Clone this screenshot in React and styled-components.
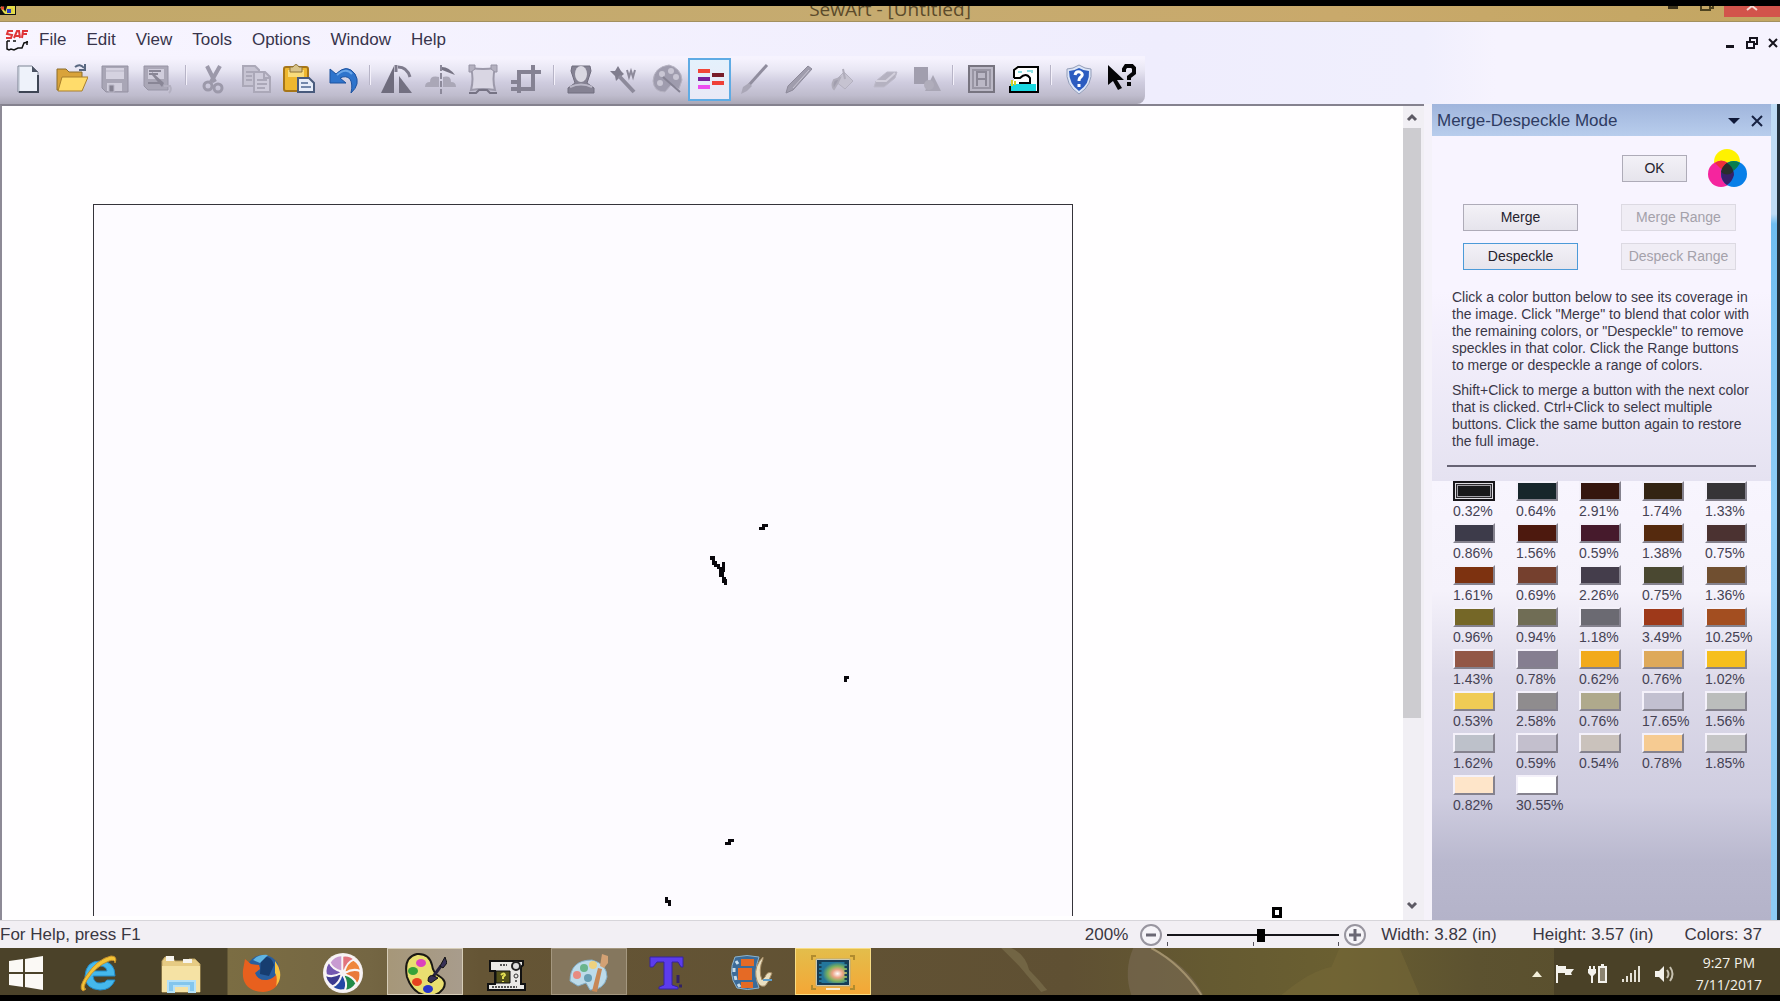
import React, { useState } from "react";
import styled, { createGlobalStyle, css } from "styled-components";

const Global = createGlobalStyle`
  * { box-sizing: border-box; }
  html, body { margin: 0; height: 100%; overflow: hidden; background: #000; }
  button, input { font: inherit; color: inherit; }
  button { padding: 0; margin: 0; border: 0; background: none; }
  svg { display: block; flex: none; }
`;

const Screen = styled.div`
  height: 100vh;
  display: flex;
  flex-direction: column;
  padding: 6px 0;
  background: #000;
  color: #2b2840;
  font: 17px/20px "Liberation Sans", Arial, sans-serif;
`;

/* ---------- title bar ---------- */
const TitleBar = styled.header`
  flex: none;
  display: grid;
  grid-template-columns: 1fr auto 1fr;
  height: 16px;
  overflow: hidden;
  background: linear-gradient(90deg, #c2a869, #c6ab70 50%, #c9a96b 75%, #c3a662);
  border-bottom: 1px solid #a3905f;
`;
const Title = styled.h1`
  margin: -5px 0 0;
  align-self: start;
  font: 19px/16px "Open Sans", "Noto Sans", sans-serif;
  color: #5c4b2b;
`;
const TitleControls = styled.div`
  display: flex;
  justify-content: flex-end;
  align-items: flex-start;
`;
const TitleButton = styled.button`
  display: flex;
  justify-content: center;
  width: ${(p) => (p.$close ? 56 : 34)}px;
  height: 11px;
  background: ${(p) => (p.$close ? "#d2544b" : "transparent")};
`;

/* ---------- menu ---------- */
const MenuBar = styled.nav`
  flex: none;
  display: flex;
  align-items: center;
  height: 34px;
  padding: 1px 0 0 5px;
  background: linear-gradient(90deg, #f8f5ff, #efedfd 65%, #f0effd 80%, #f6f3fe 84%);
`;
const MenuItem = styled.button`
  padding: 0 10px;
  color: #38344c;
`;
const ChildControls = styled.div`
  display: flex;
  align-items: center;
  gap: 10px;
  margin-left: auto;
  padding: 6px 2px 0 0;
`;

/* ---------- toolbar ---------- */
const ToolRow = styled.div`
  flex: none;
  display: flex;
  height: 48px;
  background: linear-gradient(90deg, #efedfd 65%, #f0effd 80%, #f6f3fe 84%);
`;
const ToolBar = styled.div`
  display: flex;
  align-items: center;
  padding: 0 3px 2px 7px;
  border-radius: 0 0 8px 0;
  background: linear-gradient(#f6f3fe 5%, #e9e7f4 28%, #cfccdf 55%, #bfbccd 82%, #aaa7b6);
`;
const ToolButton = styled.button`
  display: grid;
  place-items: center;
  width: 43px;
  height: 43px;
  ${(p) =>
    p.$on &&
    css`
      background: linear-gradient(#e4f1fc, #eae9f6);
      border: 2px solid #5fabe4;
    `}
`;
const Divider = styled.div`
  width: 12px;
  height: 20px;
  border-left: 1px solid #b7b4c7;
  background: linear-gradient(90deg, #f4f1fb 1px, transparent 1px);
  margin: 0 -6px 8px 6px;
`;
const DividerSlot = styled.div`
  width: 12px;
`;

/* ---------- work area ---------- */
const Work = styled.main`
  flex: 1;
  min-height: 0;
  display: flex;
  background: #f5f2fa;
`;
const Viewer = styled.section`
  flex: 1;
  min-width: 0;
  display: flex;
  border-top: 2px solid #85828f;
  border-left: 2px solid #8d8a96;
`;
const Canvas = styled.div`
  flex: 1;
  min-width: 0;
  position: relative;
  overflow: hidden;
  padding: 98px 0 4px 91px;
  background: #fffeff;
`;
const Page = styled.div`
  width: 980px;
  height: 100%;
  overflow: hidden;
  border: 1px solid #35333a;
  border-bottom: 0;
  background: #fdfbff;
`;
const Handle = styled.button`
  position: absolute;
  left: 1270px;
  bottom: 2px;
  width: 10px;
  height: 11px;
  border: 3px solid #000;
  background: #fff;
`;
const ScrollBar = styled.div`
  flex: none;
  width: 21px;
  padding: 0 3px 4px 0;
  display: flex;
  flex-direction: column;
  justify-content: space-between;
  background: #f1eff4;
`;
const ScrollButton = styled.button`
  flex: none;
  display: grid;
  place-items: center;
  height: 22px;
`;
const ScrollTrack = styled.div`
  flex: 1;
`;
const ScrollThumb = styled.div`
  height: 77%;
  background: #cdccd0;
`;

/* ---------- side panel ---------- */
const Panel = styled.aside`
  flex: none;
  width: 339px;
  margin-left: 8px;
  display: flex;
  flex-direction: column;
  background: #b5b4ca;
`;
const PanelHeader = styled.div`
  flex: none;
  display: flex;
  align-items: center;
  gap: 11px;
  height: 32px;
  padding: 1px 8px 0 5px;
  background: linear-gradient(#a0b5dc, #b8cdec);
`;
const PanelTitle = styled.h2`
  margin: 0 auto 0 0;
  font: inherit;
  color: #2e3b62;
`;
const PanelTop = styled.div`
  flex: none;
  padding: 15px 15px 14px 15px;
  background: linear-gradient(#f8f4ff 45%, #e5e2f1);
  font-size: 14px;
  line-height: 17px;
`;
const OkRow = styled.div`
  display: flex;
  align-items: center;
  justify-content: flex-end;
  gap: 20px;
  height: 34px;
  padding-right: 9px;
  margin-bottom: 19px;
`;
const Actions = styled.div`
  display: grid;
  grid-template-columns: 115px 115px;
  justify-content: space-between;
  row-gap: 12px;
  padding: 0 20px 0 16px;
  margin-bottom: 19px;
`;
const PushButton = styled.button`
  width: ${(p) => p.$width || 115}px;
  height: 27px;
  border: 1px solid ${(p) => (p.$focus ? "#4c9ad8" : "#aeabb8")};
  background: linear-gradient(#f3f1f7, #e6e4ec);
  color: #25222e;
  &:disabled {
    border-color: #dcd9e2;
    background: #f0edf5;
    color: #a4a1aa;
  }
`;
const Hint = styled.p`
  margin: 0 0 8px 5px;
  color: #3a3747;
`;
const Rule = styled.hr`
  margin: 15px 0 0;
  border: 0;
  height: 2px;
  background: #666374;
`;
const Swatches = styled.div`
  flex: 1;
  display: grid;
  grid-template-columns: repeat(5, 63px);
  grid-auto-rows: 42px;
  padding: 0 0 0 21px;
  background: linear-gradient(#f8f5fe, #f5f2fb 25%, #dedbea 45%, #cfcde0 72%, #b9b8ce 87%, #b4b3c9);
`;
const SwatchCell = styled.div`
  display: flex;
  flex-direction: column;
  font-size: 14px;
  line-height: 20px;
`;
const Swatch = styled.button`
  width: 42px;
  height: 20px;
  border: 2px solid;
  border-color: #f4f1fa #85828e #85828e #f4f1fa;
  background: ${(p) => p.$color};
  ${(p) =>
    p.$on &&
    css`
      border-color: #17151a;
      box-shadow: inset 0 0 0 1px #dedce2, inset 0 0 0 2px #2a282d, inset 0 0 0 3px #a3a1a8;
    `}
`;
const SwatchLabel = styled.label`
  color: #454254;
`;
const WindowEdge = styled.div`
  flex: none;
  width: 9px;
  border-right: 3px solid #22313d;
  background: linear-gradient(#bfdcf5 110px, #6fbdf0 120px, #8fcdf6 50%, #8ecbf4);
`;

/* ---------- status bar ---------- */
const StatusBar = styled.footer`
  flex: none;
  display: flex;
  align-items: center;
  height: 28px;
  padding: 1px 18px 0 0;
  background: #f2eff4;
  border-top: 1px solid #d7d5da;
  color: #3a3742;
`;
const Zoom = styled.div`
  display: flex;
  align-items: center;
  gap: 11px;
  margin-left: auto;
`;
const ZoomButton = styled.button`
  display: grid;
  place-items: center;
`;
const SliderBox = styled.div`
  width: 172px;
  margin: 0 -7px;
  height: 20px;
`;
const Slider = styled.input`
  appearance: none;
  display: block;
  width: 100%;
  height: 14px;
  margin: 3px 0 0;
  background: linear-gradient(#15141a, #15141a) center / 100% 2px no-repeat;
  &::-webkit-slider-thumb {
    appearance: none;
    width: 8px;
    height: 13px;
    background: #000;
  }
`;
const Ticks = styled.div`
  display: flex;
  justify-content: space-between;
  i {
    width: 1px;
    height: 4px;
    background: #55525c;
  }
`;
const Readout = styled.span`
  margin-left: ${(p) => p.$gap}px;
  white-space: nowrap;
`;

/* ---------- taskbar ---------- */
const TaskBar = styled.footer`
  flex: none;
  display: flex;
  height: 47px;
  background:
    linear-gradient(90deg, #4b4229 0 227px, #7b6d43 228px, #746643 370px, #655535 480px, #5f5033 60%, #655a31 68%, #6a5f31 75%, #5c5230 83%, #564b29);
`;
const Wallpaper = styled.svg`
  flex: 1;
  min-width: 0;
  height: 47px;
`;
const Task = styled.button`
  display: grid;
  place-items: center;
  flex: none;
  width: ${(p) => p.$width || 76}px;
  padding-top: 3px;
  overflow: hidden;
  ${(p) =>
    p.$tone === "active" &&
    css`
      background: linear-gradient(90deg, #a69779, #a89c8c);
      border: 1px solid #d6cdb8;
    `}
  ${(p) =>
    p.$tone === "open" &&
    css`
      background: #85775e;
      border: 1px solid #a4977f;
    `}
  ${(p) =>
    p.$tone === "alert" &&
    css`
      background: linear-gradient(#e3bd4b, #f4a736);
      border: 1px solid #f8dc84;
    `}
`;
const TaskGap = styled.div`
  width: 9px;
`;
const Tray = styled.div`
  flex: none;
  display: flex;
  align-items: center;
  gap: 13px;
  padding: 5px 18px 0 0;
  color: #f4f1ea;
  background: linear-gradient(90deg, transparent 22px, #4a4127 22px);
`;
const Clock = styled.time`
  margin-left: 9px;
  font: 14px/22px "Open Sans", "Noto Sans", sans-serif;
  text-align: center;
`;

/* ---------- drawings ---------- */
const I = ({ children, w = 32, h = 32, ...rest }) => (
  <svg width={w} height={h} viewBox={`0 0 ${w} ${h}`} aria-hidden="true" {...rest}>
    {children}
  </svg>
);
const g = "#9c99aa";

const tools = [
  ["New", <I><path d="M5 3h14l6 6v20H5z" fill="#eef2fa" stroke="#7d8494" /><path d="M19 3v6h6z" fill="#4c5363" /><path d="M6 29h19V12" fill="none" stroke="#3e4554" strokeWidth="2" /><path d="M6 4v24" stroke="#b5bccb" /></I>],
  ["Open", <I><path d="M1 6h9l3 3h13v18H1z" fill="#d9a33a" stroke="#8b6d2c" /><path d="M6 14h26l-6 14H2z" fill="#ffdc6b" stroke="#a97f2c" /><path d="M19 4q5-4 9 1m1-4v6h-6" fill="none" stroke="#586780" strokeWidth="2" /></I>],
  ["Save", <I><path d="M3 3h26v26H7l-4-4z" fill="#a9a6b6" stroke="#9491a2" /><path d="M7 5h18v11H7z" fill="#d5d2e0" /><path d="M8 20h15v8H8z" fill="#d0cddb" /><path d="M10 22h5v7h-5zM7 8h18" fill="#858291" stroke="#b9b6c6" /></I>],
  ["Save as", <I><path d="M2 3h24v24H6l-4-4z" fill="#aaa7b7" stroke="#9794a5" /><path d="M6 6h16v10H6z" fill="#d0cddc" /><path d="M7 8h12M7 11h9M6 20h12" stroke="#898696" strokeWidth="2" /><path d="M10 9l12 11-2 4-10-12z" fill="#898696" /><path d="M22 23h6q2 4-1 7" fill="none" stroke="#b3b0c0" strokeWidth="2" /></I>],
  null,
  ["Cut", <I><path d="M10 3l8 16M23 3l-9 16" stroke={g} strokeWidth="4" /><circle cx="11" cy="23" r="4" fill="none" stroke={g} strokeWidth="3" /><circle cx="21" cy="25" r="4" fill="none" stroke={g} strokeWidth="3" /></I>],
  ["Copy", <I><path d="M3 3h12l4 4v16H3z" fill="#c6c3d2" stroke="#aba8b8" strokeWidth="2" /><path d="M14 9h11l5 5v15H14z" fill="#cecbda" stroke="#aba8b8" strokeWidth="2" /><path d="M6 9h8M6 13h6M6 17h6M17 17h10M17 21h10M17 25h8M24 9v6h6" fill="none" stroke="#aba8b8" strokeWidth="2" /></I>],
  ["Paste", <I><rect x="1" y="4" width="24" height="24" rx="2" fill="#eeb72f" stroke="#a77618" strokeWidth="2" /><path d="M5 7h16v7H5z" fill="#f9dc7a" /><path d="M7 9V4h3q3-5 6 0h3v5z" fill="#d9c48a" stroke="#8d7338" /><path d="M15 15h11l5 5v9H15z" fill="#e7edf9" stroke="#485a7c" strokeWidth="2" /><path d="M18 20h7M18 24h10" stroke="#7388ac" strokeWidth="2" /></I>],
  ["Undo", <I><path d="M4 6v14h16l-6-5q6-3 10 1 3 5 1 14 10-9 4-19Q21 0 10 11z" fill="#2f74cc" stroke="#1d529f" /><path d="M11 12q9-8 15-1" fill="none" stroke="#6ba6e8" strokeWidth="2" /></I>],
  null,
  ["Mirror", <I><path d="M13 3v27H0z" fill="#6f6c7d" /><path d="M18 13l13 17H18z" fill="#737081" /><path d="M15 2v7M17 4q9 0 12 10" fill="none" stroke="#7e7b8c" strokeWidth="3" /></I>],
  ["Flip", <I><path d="M15 14Q6 12 6 19q-5 0-5 5h14zM19 14q8-2 8 5 5 0 5 5H19z" fill="#aaa7b7" /><path d="M17 2v29" stroke="#8c899a" strokeWidth="2" strokeDasharray="6 2" /><path d="M18 4q7 0 13 8l-13-5z" fill="#777484" /></I>],
  ["Frame", <I><path d="M4 5q12 2 24 0-3 11 0 22-12-2-24 0 3-11 0-22z" fill="#d9d6e3" stroke="#9c99aa" strokeWidth="2" /><path d="M2 2h6v4l-4 3H2zM24 2h6v7h-2l-4-3z" fill="#b3b0bf" stroke="#9794a5" /><path d="M2 30h7l3-3h8l3 3h7" fill="none" stroke="#767384" strokeWidth="2" /></I>],
  ["Crop", <I><path d="M9 30V9h22M1 26h22V2M1 19h7" fill="none" stroke="#858293" strokeWidth="4" /></I>],
  null,
  ["Stamp", <I><path d="M7 3h18l1 5-4 12 7 5v5H3v-5l7-5L6 8z" fill="#858293" stroke="#716e7f" /><ellipse cx="16" cy="11" rx="6" ry="8" fill="#dad8e2" /><path d="M5 24q11-5 22 0" stroke="#bbb8c8" strokeWidth="2" fill="none" /></I>],
  ["Wand", <I><path d="M2 8h5l3-5 3 5 3 3-5 4-3 3-1-5z" fill="#807d8e" /><path d="M11 13l15 16" stroke="#8d8a9b" strokeWidth="4" /><path d="M19 7l2 7 2-6 2 6 2-7" fill="none" stroke="#8d8a9b" strokeWidth="2" /></I>],
  ["Palette", <I><path d="M18 2q12 3 13 15l-3 9-8-4-6 7Q3 29 2 18 3 4 18 2z" fill="#9f9cae" stroke="#b6b3c2" /><g fill="#c9c6d4"><circle cx="11" cy="11" r="3" /><circle cx="20" cy="8" r="3" /><circle cx="25" cy="14" r="3" /><circle cx="9" cy="20" r="3" /></g><path d="M12 14l17 15" stroke="#858293" strokeWidth="2" /></I>],
  ["Merge and despeckle", <I><path d="M4 6h12v4H4z" fill="#f24638" /><path d="M4 14h12v4H4z" fill="#7a209d" /><path d="M4 22h12v4H4z" fill="#ed4df0" /><path d="M18 10h12v4H18z" fill="#781d2a" /><path d="M18 18h12v4H18z" fill="#ef4038" /></I>, true],
  ["Brush", <I><path d="M30 2L12 22" stroke="#908d9e" strokeWidth="3" /><path d="M12 20l3 3-5 5-6 3 2-7z" fill="#aaa7b7" /></I>],
  ["Pencil", <I><path d="M28 3l4 3L13 27l-7 3 2-7z" fill="#a09dad" stroke="#8d8a9a" /><path d="M29 7L13 25" stroke="#c8c5d2" /></I>],
  ["Fill", <I><path d="M12 18l9-9 9 9-8 8z" fill="#c6c3d1" stroke="#b4b1c0" /><path d="M11 17q-3 6 0 9 4-6 6-11zM20 6l2 10" fill="#a19eae" stroke="#b0adbb" strokeWidth="2" /></I>],
  ["Eraser", <I><path d="M21 9h10l-2 6-11 9H8l2-6z" fill="#b5b2c1" stroke="#bdbac9" /><path d="M10 18h10l9-8" fill="none" stroke="#d3d0dd" strokeWidth="2" /></I>],
  ["Shapes", <I><path d="M5 4h14v17H5z" fill="#a19eae" /><path d="M24 12l8 16H16z" fill="#a9a6b5" /><circle cx="20" cy="22" r="5" fill="#b0adbb" /></I>],
  null,
  ["Frame letter", <I><rect x="5" y="3" width="25" height="26" fill="#bbb8c6" stroke="#777480" strokeWidth="2" /><path d="M9 7h17v18H9z" fill="none" stroke="#9996a4" strokeWidth="2" /><path d="M13 23V9h9v14M13 16h9" fill="none" stroke="#8b8896" strokeWidth="2" /></I>],
  ["Stitch", <I><path d="M7 5l2-2h21v25H3v-6l4-5z" fill="#fff" /><path d="M3 21h26v7H3z" fill="#19d8e0" /><path d="M7 15V7l4-3h20v25H3v-6" fill="none" stroke="#000" strokeWidth="2" /><path d="M7 15h6q6-6 10 0v5H12" fill="none" stroke="#000" strokeWidth="2" /><path d="M20 8h5v2M11 9h4" fill="none" stroke="#8adfe2" strokeWidth="2" /><path d="M5 17v6M8 18v4" stroke="#d3cf28" strokeWidth="2" /></I>],
  null,
  ["Help topics", <I><path d="M17 2q6 4 12 4 2 16-12 25Q3 22 5 6q6 0 12-4z" fill="#dce5f7" stroke="#929cb7" /><path d="M17 5q5 3 10 3 1 13-10 20Q7 21 7 8q5 0 10-3z" fill="#2c5cc0" /><path d="M13 12q1-4 5-3 4 2 1 5-2 1-2 4M17 21v3" fill="none" stroke="#fff" strokeWidth="3" /></I>],
  ["What is this", <I><path d="M3 2v20l5-4 5 9 4-2-5-8h7z" fill="#050507" /><path d="M19 9V6l2-3h6l2 2v5l-5 4v3M24 19v4" fill="none" stroke="#050507" strokeWidth="4" /></I>],
];

const colors = [
  ["#17171a", "0.32%"], ["#17262b", "0.64%"], ["#35160e", "2.91%"], ["#332413", "1.74%"], ["#363437", "1.33%"],
  ["#3d3b4a", "0.86%"], ["#4d190e", "1.56%"], ["#461a2c", "0.59%"], ["#552a0e", "1.38%"], ["#4b3231", "0.75%"],
  ["#7d3210", "1.61%"], ["#75402e", "0.69%"], ["#443d4b", "2.26%"], ["#4a4831", "0.75%"], ["#704f30", "1.36%"],
  ["#756727", "0.96%"], ["#706d55", "0.94%"], ["#6b6a72", "1.18%"], ["#9e391a", "3.49%"], ["#a34e20", "10.25%"],
  ["#925746", "1.43%"], ["#857e90", "0.78%"], ["#f2aa1c", "0.62%"], ["#dea95a", "0.76%"], ["#f6bf1d", "1.02%"],
  ["#f0cb55", "0.53%"], ["#8f8c8e", "2.58%"], ["#afa98c", "0.76%"], ["#c2c0d0", "17.65%"], ["#bbbdbc", "1.56%"],
  ["#bdc1ca", "1.62%"], ["#c3bfcd", "0.59%"], ["#cac2bc", "0.54%"], ["#f6cb92", "0.78%"], ["#c6c6c7", "1.85%"],
  ["#fee5c9", "0.82%"], ["#ffffff", "30.55%"],
];

const Artwork = () => (
  <svg width="978" height="711" viewBox="0 0 978 711" fill="#09070c" aria-hidden="true">
    <path d="M668 319h6v3h-3v3h-6v-3h3zM616 351h5v5h2v3h3v3h2v-5h3v10h-1v5h2v2h1v6h-3v-2h-2v-6h-3v-8h-2v-2h-3v-2h-2v-5h-2zM750 471h5v3h-2v3h-3zM634 634h6v3h-3v3h-6v-3h3zM571 692h3v3h3v6h-3v-3h-3z" />
  </svg>
);

const WinLogo = () => <I w={36} h={36}><path d="M1 6l14-2v13H1zM17 4l18-3v16H17zM1 19h14v13L1 30zM17 19h18v16l-18-3z" fill="#fbf9f5" /></I>;
const IeLogo = () => <I w={40} h={40}><path d="M36 23H14q1 8 8 7 4 0 6-3h8q-4 10-15 10Q6 36 6 23 7 8 21 8q15 0 15 15zM14 18h14q-1-5-7-5-6 1-7 5z" fill="#45b8ec" stroke="#238bc9" /><path d="M4 38Q-1 35 7 23 18 6 32 3q7 0 4 7 0-4-6-2Q17 13 8 27q-5 9-1 9z" fill="#f3c336" stroke="#c8912a" /></I>;
const Folder = () => <I w={44} h={40}><path d="M3 8l3-4h7l3 4h14v-2h6l5 5v28H3z" fill="#e6cb83" stroke="#bba163" /><path d="M7 3h8v5H7zM24 6h9v4h-9z" fill="#f6f4ee" /><path d="M3 13h38v26H3z" fill="#f5e2a4" /><path d="M9 39V28h27v11h-6v-6H15v6z" fill="#83c6ed" stroke="#b5e1f7" strokeWidth="2" /></I>;
const Fox = () => <I w={42} h={42}><circle cx="22" cy="20" r="17" fill="#285e9f" /><path d="M20 5q11-2 13 8l-5 11-9-2z" fill="#173d70" /><path d="M12 8q6-6 15-5l-8 8z" fill="#5fb4e2" /><path d="M37 12q7 26-15 28Q0 39 2 18L4 7l6 5 8 1 1 4-5 4q3 8 12 7 12-2 11-16z" fill="#e8601e" /><path d="M34 9q10 14 1 25 2-9-1-13z" fill="#f9c440" /></I>;
const Wheel = () => {
  const fills = ["#e2737c", "#ef873c", "#e9793b", "#228a48", "#2447a5", "#3c3a8f", "#7357b0", "#c89bd1"];
  return (
    <I w={44} h={44}>
      <circle cx="22" cy="22" r="20" fill="#f4eff0" />
      {fills.map((f, i) => <path key={f} d="M22 20Q17 12 20 5q9-2 14 4l-11 11z" fill={f} transform={`rotate(${i * 45} 22 22)`} stroke="#f8f4f5" strokeWidth="2" />)}
    </I>
  );
};
const SewArtLogo = () => <I w={44} h={46}><path d="M14 2q12-1 15 11 1 8 7 11 9 5 4 13-7 9-19 6Q9 40 4 25 0 5 14 2z" fill="#e9df70" stroke="#1a1814" strokeWidth="2" /><ellipse cx="18" cy="11" rx="5" ry="4" fill="#dc42bd" /><ellipse cx="10" cy="19" rx="5" ry="4" fill="#35a339" /><ellipse cx="14" cy="30" rx="5" ry="4" fill="#e7421f" /><ellipse cx="25" cy="37" rx="5" ry="4" fill="#2836c9" /><path d="M29 26l9-12" stroke="#28233f" strokeWidth="3" /><path d="M25 29q0-7 6-5l4 2-7 5zM37 14l5-9 2 6-4 5z" fill="#373056" stroke="#111" /></I>;
const Machine = () => <I w={40} h={38}><g transform="translate(0 4)"><path d="M3 3h33v4l-2 2v17h4v6H1v-6h7V13H3z" fill="#eae9e6" stroke="#111" strokeWidth="2" /><path d="M9 13h14v12H9z" fill="#53511a" stroke="#111" /><path d="M14 17q3-3 4 0l-2 2v2M16 23v1" stroke="#e3df53" strokeWidth="2" fill="none" /><circle cx="29" cy="8" r="4" fill="#ddd" stroke="#222" strokeWidth="2" /><circle cx="29" cy="18" r="2" fill="none" stroke="#333" /><circle cx="29" cy="23" r="1" fill="#333" /><path d="M13 7h7M5 29h25" stroke="#555" strokeWidth="2" strokeDasharray="2 1" /></g></I>;
const Paint = () => <I w={42} h={42}><path d="M24 8q15 4 15 17-3 13-17 13l-4-7-8 3-8-5Q2 8 24 8z" fill="#bcdbea" stroke="#82adc6" /><circle cx="9" cy="23" r="4" fill="#e78b81" /><circle cx="16" cy="16" r="4" fill="#69b58c" /><circle cx="25" cy="13" r="4" fill="#eed27f" /><circle cx="20" cy="26" r="4" fill="#679eb4" /><path d="M24 39l6-23 4 1-5 23z" fill="#c78755" /><path d="M32 14l2-12 6 2v7l-4 5z" fill="#d3a174" /></I>;
const TGlyph = () => <I w={38} h={36}><path d="M2 2h33v10h-2l-3-5h-6v23l6 2v2H11v-2l5-2V7H9l-4 5H2z" fill="#5c3ced" stroke="#37249e" /><path d="M30 20v8M31 31h3" stroke="#332263" strokeWidth="3" /></I>;
const Film = () => <I w={44} h={38}><path d="M6 3q12-3 24 0-6 15 0 31-12 3-22 0Q-2 20 6 3z" fill="#3c6b98" stroke="#8db3cc" /><path d="M12 5h13v7H12zM9 14h14v12H9zM12 28h12v6H12z" fill="#e56a25" /><path d="M7 7l2 3M5 14v4M6 22l1 4M9 30l2 3" stroke="#c8ddeb" strokeWidth="3" /><path d="M34 3q-9 9-7 20 2 11 9 9 4-4 7-13-5-2-7 4l-3 3q-4-10 1-21z" fill="#eadfc1" stroke="#a48b64" /><path d="M34 26h9" stroke="#5f9ecb" strokeWidth="2" /></I>;
const Capture = () => <I w={44} h={38}><path d="M5 5h34v27H5z" fill="#e4e6e2" stroke="#b4aa7e" /><defs><radialGradient id="cap" cx=".65" cy=".55"><stop offset="0" stopColor="#fff" /><stop offset=".35" stopColor="#eca385" /><stop offset=".65" stopColor="#7eb35c" /><stop offset="1" stopColor="#23769b" /></radialGradient></defs><path d="M7 7h30v23H7z" fill="url(#cap)" stroke="#173c56" strokeWidth="2" /><path d="M9 8v21M35 8v21" stroke="#193f55" strokeWidth="3" strokeDasharray="2 2" /><path d="M1 6V2h4M39 2h4v4M1 31v4h4M39 35h4v-4" fill="none" stroke="#b08b2e" strokeWidth="2" /><path d="M15 35h14" stroke="#f7ead0" strokeWidth="2" /></I>;

const Tool = ({ tool }) =>
  tool ? <ToolButton type="button" aria-label={tool[0]} $on={tool[2]}>{tool[1]}</ToolButton> : <DividerSlot><Divider /></DividerSlot>;

export default function App() {
  const [selected, setSelected] = useState(0);
  const [zoom, setZoom] = useState(55);
  return (
    <Screen>
      <Global />
      <TitleBar>
        <I w={17} h={10}><path d="M0 0h16v9H0z" fill="#111" /><path d="M1 1l4 6M8 1h6v6H6z" fill="#ddd33b" stroke="#e4dc4b" strokeWidth="2" /><path d="M1 2h3" stroke="#e74732" strokeWidth="3" /><path d="M7 5h4" stroke="#2a3ac4" strokeWidth="4" /></I>
        <Title>SewArt - [Untitled]</Title>
        <TitleControls>
          <TitleButton type="button" aria-label="Minimize"><I w={12} h={4}><path d="M1 0h10v3H1z" fill="#3b321c" /></I></TitleButton>
          <TitleButton type="button" aria-label="Restore"><I w={14} h={6}><path d="M1 0v4h9V0M10 2h3V0" fill="none" stroke="#4d421f" strokeWidth="2" /></I></TitleButton>
          <TitleButton type="button" aria-label="Close" $close><I w={14} h={5}><path d="M2 4l5-4 5 4" fill="none" stroke="#f6dbd6" strokeWidth="2" /></I></TitleButton>
        </TitleControls>
      </TitleBar>

      <MenuBar>
        <I w={24} h={22}><g fill="none" stroke="#df3438" strokeWidth="2"><path d="M8 2H3L2 5l5 1-1 3H1M9 9l3-7h2l1 7M10 7h5M17 9l1-7h5M18 5h4" /></g><path d="M2 12v8l2 1 2-1 3 1 4-2h4l2-5 4-1M2 12h3M8 12h3M22 12v4" fill="none" stroke="#111" strokeWidth="1.5" /></I>
        {["File", "Edit", "View", "Tools", "Options", "Window", "Help"].map((m) => <MenuItem type="button" key={m}>{m}</MenuItem>)}
        <ChildControls>
          <button type="button" aria-label="Minimize document"><I w={12} h={14}><path d="M2 9h8v3H2z" fill="#15131d" /></I></button>
          <button type="button" aria-label="Restore document"><I w={12} h={14}><path d="M4 5V2h7v6H8M1 6h7v6H1z" fill="none" stroke="#15131d" strokeWidth="2" /></I></button>
          <button type="button" aria-label="Close document"><I w={10} h={12}><path d="M1 2l8 8M9 2l-8 8" stroke="#15131d" strokeWidth="2" /></I></button>
        </ChildControls>
      </MenuBar>

      <ToolRow>
        <ToolBar>{tools.map((t, i) => <Tool key={i} tool={t} />)}</ToolBar>
      </ToolRow>

      <Work>
        <Viewer>
          <Canvas>
            <Page><Artwork /></Page>
            <Handle type="button" aria-label="Resize canvas" />
          </Canvas>
          <ScrollBar>
            <ScrollButton type="button" aria-label="Scroll up"><I w={12} h={9}><path d="M2 7l4-4 4 4" fill="none" stroke="#5d5a64" strokeWidth="3" /></I></ScrollButton>
            <ScrollTrack><ScrollThumb /></ScrollTrack>
            <ScrollButton type="button" aria-label="Scroll down"><I w={12} h={9}><path d="M2 2l4 4 4-4" fill="none" stroke="#5d5a64" strokeWidth="3" /></I></ScrollButton>
          </ScrollBar>
        </Viewer>

        <Panel>
          <PanelHeader>
            <PanelTitle>Merge-Despeckle Mode</PanelTitle>
            <button type="button" aria-label="Panel options"><I w={12} h={8}><path d="M0 1h12L6 7z" fill="#0f1838" /></I></button>
            <button type="button" aria-label="Close panel"><I w={12} h={12}><path d="M1 1l10 10M11 1L1 11" stroke="#182242" strokeWidth="2" /></I></button>
          </PanelHeader>
          <PanelTop>
            <OkRow>
              <PushButton type="button" $width={65}>OK</PushButton>
              <I w={40} h={40}><g><circle cx="20" cy="14" r="13" fill="#fff200" /><circle cx="14" cy="26" r="13" fill="#f5259e" /><circle cx="27" cy="26" r="13" fill="#087fe8" /></g><path d="M8 15q6-5 13 0l-3 8q-6-3-10-8z" fill="#ed303c" /><path d="M20 15q7-4 13 0-5 9-12 10z" fill="#087d4d" /><path d="M20 15q7 5 7 12-2 7-7 10-6-4-6-12 1-6 6-10z" fill="#36206a" /><path d="M20 15q6 4 6 9-6 5-12 0 1-6 6-9z" fill="#292e2c" /></I>
            </OkRow>
            <Actions>
              <PushButton type="button">Merge</PushButton>
              <PushButton type="button" disabled>Merge Range</PushButton>
              <PushButton type="button" $focus>Despeckle</PushButton>
              <PushButton type="button" disabled>Despeck Range</PushButton>
            </Actions>
            <Hint>
              Click a color button below to see its coverage in<br />the image. Click "Merge" to blend that color with<br />the remaining colors, or "Despeckle" to remove<br />speckles in that color. Click the Range buttons<br />to merge or despeckle a range of colors.
            </Hint>
            <Hint>
              Shift+Click to merge a button with the next color<br />that is clicked. Ctrl+Click to select multiple<br />buttons. Click the same button again to restore<br />the full image.
            </Hint>
            <Rule />
          </PanelTop>
          <Swatches>
            {colors.map(([color, label], i) => (
              <SwatchCell key={i}>
                <Swatch type="button" id={`color-${i}`} $color={color} $on={i === selected} onClick={() => setSelected(i)} />
                <SwatchLabel htmlFor={`color-${i}`}>{label}</SwatchLabel>
              </SwatchCell>
            ))}
          </Swatches>
        </Panel>
        <WindowEdge />
      </Work>

      <StatusBar>
        <span>For Help, press F1</span>
        <Zoom>
          <label htmlFor="zoom">200%</label>
          <ZoomButton type="button" aria-label="Zoom out"><I w={24} h={24}><circle cx="12" cy="12" r="10" fill="#f6f4f8" stroke="#98959f" strokeWidth="2" /><path d="M7 12h10" stroke="#6b6874" strokeWidth="3" /></I></ZoomButton>
          <SliderBox>
            <Slider id="zoom" type="range" min="0" max="100" value={zoom} onChange={(e) => setZoom(+e.target.value)} />
            <Ticks><i /><i /><i /></Ticks>
          </SliderBox>
          <ZoomButton type="button" aria-label="Zoom in"><I w={24} h={24}><circle cx="12" cy="12" r="10" fill="#f6f4f8" stroke="#98959f" strokeWidth="2" /><path d="M6 12h12M12 6v12" stroke="#6b6874" strokeWidth="3" /></I></ZoomButton>
        </Zoom>
        <Readout $gap={14}>Width: 3.82 (in)</Readout>
        <Readout $gap={36}>Height: 3.57 (in)</Readout>
        <Readout $gap={31}>Colors: 37</Readout>
      </StatusBar>

      <TaskBar>
        <Task type="button" aria-label="Start" $width={52}><WinLogo /></Task>
        <TaskGap />
        <Task type="button" aria-label="Internet Explorer"><IeLogo /></Task>
        <TaskGap />
        <Task type="button" aria-label="File Explorer" $width={70}><Folder /></Task>
        <TaskGap />
        <Task type="button" aria-label="Firefox" $width={74}><Fox /></Task>
        <Task type="button" aria-label="Photos" $width={88}><Wheel /></Task>
        <Task type="button" aria-label="SewArt" $tone="active"><SewArtLogo /></Task>
        <Task type="button" aria-label="Sewing" $width={88}><Machine /></Task>
        <Task type="button" aria-label="Paint" $tone="open"><Paint /></Task>
        <Task type="button" aria-label="Text tool" $width={80}><TGlyph /></Task>
        <Task type="button" aria-label="Movies" $width={88}><Film /></Task>
        <Task type="button" aria-label="Screen recorder" $tone="alert"><Capture /></Task>
        <Wallpaper viewBox="0 0 660 47" preserveAspectRatio="none" aria-hidden="true">
          <path d="M130 0h10q14 6 18 22 10 10 18 20l-6 2-22-26z" fill="#7b6d4b" opacity=".7" />
          <path d="M262 0h18q36 16 52 47h-72q-8-24 2-47z" fill="#7a6a55" opacity=".6" />
          <path d="M280 0q30 16 50 47" fill="none" stroke="#a2916c" strokeWidth="2" />
          <path d="M410 47q30-25 50-28l8-19h60l20 47z" fill="#786a37" opacity=".5" />
        </Wallpaper>
        <Tray>
          <I w={10} h={8}><path d="M0 7l5-6 5 6z" fill="#f3efd9" /></I>
          <I w={20} h={20}><path d="M2 1v18" stroke="#f4f2ec" strokeWidth="2" /><path d="M3 2h8v3h8l-3 4 1 2h-7V9H3z" fill="#f4f2ec" /></I>
          <I w={20} h={20}><path d="M11 3h7v15h-7zM13 1h3" fill="#8b8370" stroke="#f4f2ec" strokeWidth="2" /><path d="M2 2v3M6 2v3" stroke="#f4f2ec" strokeWidth="2" /><path d="M0 5h8v4l-3 3v7H3v-7L0 9z" fill="#f4f2ec" /></I>
          <I w={20} h={20}><path d="M1 15h2v3H1zM5 12h2v6H5zM9 9h2v9H9zM13 6h2v12h-2zM17 2h2v16h-2z" fill="#e6e2d7" /></I>
          <I w={20} h={20}><path d="M1 7h4l5-5v16l-5-5H1z" fill="#f4f2ec" /><path d="M13 6q3 4 0 8M16 3q5 7 0 14" fill="none" stroke="#c7c1b0" strokeWidth="2" /></I>
          <Clock>9:27 PM<br />7/11/2017</Clock>
        </Tray>
      </TaskBar>
    </Screen>
  );
}
